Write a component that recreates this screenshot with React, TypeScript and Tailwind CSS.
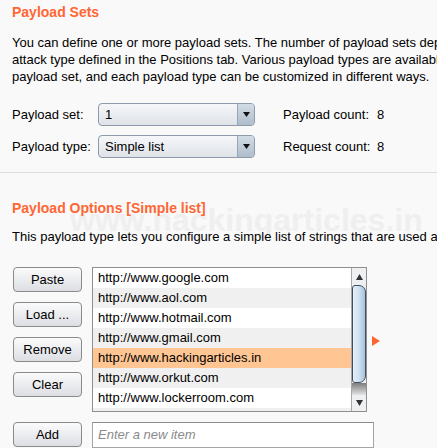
import React from "react";

const urls = [
  "http://www.google.com",
  "http://www.aol.com",
  "http://www.hotmail.com",
  "http://www.gmail.com",
  "http://www.hackingarticles.in",
  "http://www.orkut.com",
  "http://www.lockerroom.com",
  "http://www.yahoo.com",
];

const SelectBox: React.FC<{ value: string }> = ({ value }) => (
  <div className="flex h-[23px] w-[157px] overflow-hidden rounded-[4px] border border-[#8c9aa9] bg-gradient-to-b from-[#f6f7f9] to-[#dfe3e8]">
    <div className="flex flex-1 items-center pl-[6px] text-[13px] text-black">
      {value}
    </div>
    <div className="flex w-[17px] items-center justify-center border-l border-[#97a6b6] bg-gradient-to-b from-[#d2dce6] to-[#aebdcc]">
      <svg width="7" height="5" viewBox="0 0 7 5">
        <polygon points="0,0 7,0 3.5,5" fill="#111" />
      </svg>
    </div>
  </div>
);

const Button: React.FC<{ label: string }> = ({ label }) => (
  <div className="flex h-[25px] w-[69px] items-center justify-center rounded-[4px] border border-[#8a8a8a] bg-gradient-to-b from-[#fbfbfc] to-[#dcdee2] text-[13px] text-black">
    {label}
  </div>
);

const App: React.FC = () => {
  return (
    <div className="relative isolate h-[448px] w-[437px] overflow-hidden bg-[#f9f9f9] font-['Liberation_Sans',Arial,sans-serif] text-[13px] text-black">
      <div className="pointer-events-none absolute left-[70px] top-[204px] -z-10 whitespace-nowrap text-[32px] font-bold leading-[32px] text-[#efefef]">
        www.hackingarticles.in
      </div>

      <div className="pl-[12px]">
        <div className="mt-[4px] text-[14px] font-bold leading-[17px] text-[#ff6633]">
          Payload Sets
        </div>
        <div className="mt-[13px] leading-[17px]">
          <div className="whitespace-nowrap">
            You can define one or more payload sets. The number of payload sets depends on the
          </div>
          <div className="whitespace-nowrap">
            attack type defined in the Positions tab. Various payload types are available for each
          </div>
          <div className="whitespace-nowrap">
            payload set, and each payload type can be customized in different ways.
          </div>
        </div>

        <div className="mt-[18px] flex flex-col gap-[9px]">
          <div className="flex items-center">
            <div className="w-[86px]">Payload set:</div>
            <SelectBox value="1" />
            <div className="ml-[28px] w-[94px]">Payload count:</div>
            <div>8</div>
          </div>
          <div className="flex items-center">
            <div className="w-[86px]">Payload type:</div>
            <SelectBox value="Simple list" />
            <div className="ml-[28px] w-[94px]">Request count:</div>
            <div>8</div>
          </div>
        </div>
      </div>

      <div className="mt-[14px] h-px w-full bg-[#dcdcdc]" />

      <div className="pl-[12px]">
        <div className="mt-[27px] text-[14px] font-bold leading-[17px] text-[#ff6633]">
          Payload Options [Simple list]
        </div>
        <div className="mt-[11px] whitespace-nowrap leading-[17px]">
          This payload type lets you configure a simple list of strings that are used as payloads.
        </div>

        <div className="mt-[22px] flex">
          <div className="ml-[1px] flex flex-col gap-[10px]">
            <Button label="Paste" />
            <Button label="Load ..." />
            <Button label="Remove" />
            <Button label="Clear" />
          </div>

          <div className="ml-[10px] flex h-[145px] w-[275px] overflow-hidden border border-[#8f8f8f] bg-white">
            <div className="flex-1 overflow-hidden">
              {urls.map((u, i) => (
                <div
                  key={u}
                  className={`flex h-[20px] items-center pl-[5px] ${
                    i === 4
                      ? "bg-[#ffc592]"
                      : i % 2 === 1
                      ? "bg-[#f0f0f0]"
                      : "bg-white"
                  }`}
                >
                  {u}
                </div>
              ))}
            </div>
            <div className="flex w-[15px] flex-col border-l border-[#a9a9a9] bg-[#eef0f2]">
              <div className="flex h-[17px] items-center justify-center">
                <svg width="7" height="6" viewBox="0 0 7 6">
                  <polygon points="3.5,0 7,6 0,6" fill="#333" />
                </svg>
              </div>
              <div className="h-[98px] rounded-r-[7px] rounded-l-[3px] border border-[#3f4f60] bg-gradient-to-r from-[#e6eff8] via-[#cfe0f0] to-[#a9c3dc]" />
              <div className="h-[12px] bg-gradient-to-b from-[#7d7d7d] to-[#e4e4e4]" />
              <div className="flex flex-1 items-center justify-center">
                <svg width="7" height="6" viewBox="0 0 7 6">
                  <polygon points="0,0 7,0 3.5,6" fill="#333" />
                </svg>
              </div>
            </div>
          </div>

          <div className="ml-[5px] mt-[69px]">
            <svg width="8" height="10" viewBox="0 0 8 10">
              <polygon points="0,0 8,5 0,10" fill="#ff6633" />
            </svg>
          </div>
        </div>

        <div className="mt-[10px] flex">
          <div className="ml-[1px]">
            <Button label="Add" />
          </div>
          <div className="ml-[10px] flex h-[26px] w-[282px] items-center border border-[#a5a5a5] border-t-[#8a8a8a] bg-white pl-[5px] italic text-[#8a8a8a]">
            Enter a new item
          </div>
        </div>
      </div>
    </div>
  );
};

export default App;
